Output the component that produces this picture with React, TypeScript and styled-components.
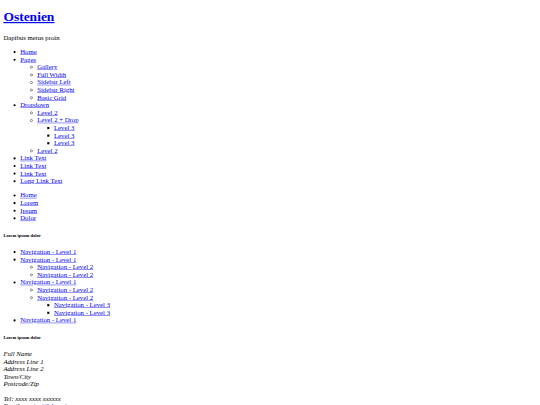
import React from "react";
import styled, { createGlobalStyle } from "styled-components";

const SCALE = 540 / 1280;

const Global = createGlobalStyle`
  html, body {
    margin: 0;
    padding: 0;
    overflow: hidden;
    background: #fff;
  }
`;

const Viewport = styled.div`
  display: flow-root;
  width: 1280px;
  transform: scale(${SCALE});
  transform-origin: 0 0;
  font-family: "Liberation Serif", "Times New Roman", serif;
  font-size: 16px;
  color: #000;
`;

const Page = styled.div`
  margin: 8px;
`;

const SiteTitle = styled.h1`
  font-size: 2em;
  font-weight: bold;
  margin: 0.67em 0;
`;

const Link = styled.a`
  color: #0000ee;
  text-decoration: underline;
`;

const Tagline = styled.p`
  margin: 1em 0;
`;

const List = styled.ul<{ $level?: number }>`
  margin: ${(p) => (p.$level && p.$level > 1 ? "0" : "1em 0")};
  padding-left: 40px;
  list-style-type: ${(p) =>
    p.$level === 2 ? "circle" : p.$level === 3 ? "square" : "disc"};
`;

const Item = styled.li`
  display: list-item;
`;

const WidgetTitle = styled.h6`
  font-size: 0.67em;
  font-weight: bold;
  margin: 2.33em 0;
`;

const Address = styled.address`
  font-style: italic;
`;

const AddressBlock = styled.p`
  margin: 1em 0;
`;

const A = ({ children }: { children: React.ReactNode }) => (
  <Link href="#">{children}</Link>
);

export default function App() {
  return (
    <Viewport>
      <Global />
      <Page>
        <SiteTitle>
          <A>Ostenien</A>
        </SiteTitle>
        <Tagline>Dapibus metus proin</Tagline>
        <List>
          <Item><A>Home</A></Item>
          <Item>
            <A>Pages</A>
            <List $level={2}>
              <Item><A>Gallery</A></Item>
              <Item><A>Full Width</A></Item>
              <Item><A>Sidebar Left</A></Item>
              <Item><A>Sidebar Right</A></Item>
              <Item><A>Basic Grid</A></Item>
            </List>
          </Item>
          <Item>
            <A>Dropdown</A>
            <List $level={2}>
              <Item><A>Level 2</A></Item>
              <Item>
                <A>Level 2 + Drop</A>
                <List $level={3}>
                  <Item><A>Level 3</A></Item>
                  <Item><A>Level 3</A></Item>
                  <Item><A>Level 3</A></Item>
                </List>
              </Item>
              <Item><A>Level 2</A></Item>
            </List>
          </Item>
          <Item><A>Link Text</A></Item>
          <Item><A>Link Text</A></Item>
          <Item><A>Link Text</A></Item>
          <Item><A>Long Link Text</A></Item>
        </List>
        <List>
          <Item><A>Home</A></Item>
          <Item><A>Lorem</A></Item>
          <Item><A>Ipsum</A></Item>
          <Item><A>Dolor</A></Item>
        </List>
        <WidgetTitle>Lorem ipsum dolor</WidgetTitle>
        <List>
          <Item><A>Navigation - Level 1</A></Item>
          <Item>
            <A>Navigation - Level 1</A>
            <List $level={2}>
              <Item><A>Navigation - Level 2</A></Item>
              <Item><A>Navigation - Level 2</A></Item>
            </List>
          </Item>
          <Item>
            <A>Navigation - Level 1</A>
            <List $level={2}>
              <Item><A>Navigation - Level 2</A></Item>
              <Item>
                <A>Navigation - Level 2</A>
                <List $level={3}>
                  <Item><A>Navigation - Level 3</A></Item>
                  <Item><A>Navigation - Level 3</A></Item>
                </List>
              </Item>
            </List>
          </Item>
          <Item><A>Navigation - Level 1</A></Item>
        </List>
        <WidgetTitle>Lorem ipsum dolor</WidgetTitle>
        <Address>
          <AddressBlock>
            Full Name<br />
            Address Line 1<br />
            Address Line 2<br />
            Town/City<br />
            Postcode/Zip
          </AddressBlock>
          <AddressBlock>
            Tel: xxxx xxxx xxxxxx<br />
            Email: <A>contact@domain.com</A>
          </AddressBlock>
        </Address>
      </Page>
    </Viewport>
  );
}
